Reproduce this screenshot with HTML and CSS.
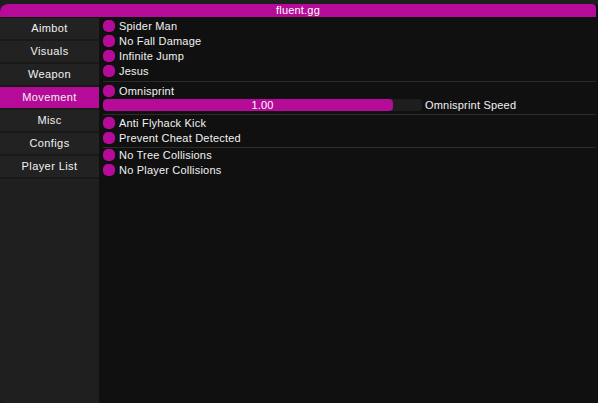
FILE: index.html
```html
<!DOCTYPE html>
<html>
<head>
<meta charset="utf-8">
<link rel="stylesheet" href="styles.css">
</head>
<body>
<div class="window">
  <div class="titlebar">fluent.gg</div>
  <div class="main">
    <nav class="sidebar">
      <div class="tab">Aimbot</div>
      <div class="tab">Visuals</div>
      <div class="tab">Weapon</div>
      <div class="tab active">Movement</div>
      <div class="tab">Misc</div>
      <div class="tab">Configs</div>
      <div class="tab">Player List</div>
    </nav>
    <section class="content">
      <div class="row"><span class="cb"></span><span>Spider Man</span></div>
      <div class="row"><span class="cb"></span><span>No Fall Damage</span></div>
      <div class="row"><span class="cb"></span><span>Infinite Jump</span></div>
      <div class="row"><span class="cb"></span><span>Jesus</span></div>
      <div class="sep s1"></div>
      <div class="row"><span class="cb"></span><span>Omnisprint</span></div>
      <div class="slider-row">
        <div class="slider">
          <div class="fill" style="width: 290px"></div>
          <span class="value">1.00</span>
        </div>
        <span class="slider-label">Omnisprint Speed</span>
      </div>
      <div class="sep s2"></div>
      <div class="row"><span class="cb"></span><span>Anti Flyhack Kick</span></div>
      <div class="row"><span class="cb"></span><span>Prevent Cheat Detected</span></div>
      <div class="sep s3"></div>
      <div class="row"><span class="cb"></span><span>No Tree Collisions</span></div>
      <div class="row"><span class="cb"></span><span>No Player Collisions</span></div>
    </section>
  </div>
</div>
</body>
</html>
```
FILE: styles.css
```css
* { box-sizing: border-box; }
html, body {
  margin: 0;
  padding: 0;
  width: 598px;
  height: 403px;
  overflow: hidden;
  background: #1d1f1f;
  font-family: "Liberation Sans", Arial, sans-serif;
  font-size: 11px;
  color: #f2f2f2;
}
.window {
  margin-top: 4px;
  height: 399px;
  display: flex;
  flex-direction: column;
  background: #0d0d0d;
  border-top-left-radius: 8px;
  border-top-right-radius: 4px;
  border-bottom-left-radius: 4px;
  overflow: hidden;
}
.titlebar {
  height: 13px;
  line-height: 13px;
  background: #b50b98;
  text-align: center;
  color: #ffffff;
  margin-right: 2px;
  border-top-right-radius: 4px;
  flex: none;
  letter-spacing: 0.2px;
}
.main {
  flex: 1;
  display: flex;
  margin-top: 1px;
  min-height: 0;
}
.sidebar {
  width: 99px;
  flex: none;
  background: #1f1f1f;
  display: flex;
  flex-direction: column;
}
.tab {
  height: 23px;
  line-height: 21px;
  text-align: center;
  background: #222222;
  border-bottom: 2px solid #191919;
  letter-spacing: 0.4px;
}
.tab.active {
  background: #b50b98;
}
.content {
  flex: 1;
  background: #101010;
  padding: 1px 2px 0 4px;
  display: flex;
  flex-direction: column;
  letter-spacing: 0.2px;
}
.row {
  height: 15px;
  display: flex;
  align-items: flex-start;
  gap: 4px;
  line-height: 14px;
}
.cb {
  width: 12px;
  height: 12px;
  margin-top: 1px;
  border-radius: 5px;
  background: #b50b98;
  flex: none;
}
.sep {
  height: 1px;
  background: #2c2c2c;
  flex: none;
}
.sep.s1 { margin: 2px 0 2px; }
.sep.s2 { margin: 3px 0 1px; }
.sep.s3 { margin: 1px 0 0; }
.slider-row {
  height: 12px;
  display: flex;
  align-items: center;
  gap: 3px;
}
.slider {
  position: relative;
  width: 319px;
  height: 12px;
  background: #1e1e1e;
  border-radius: 4px;
  overflow: hidden;
}
.fill {
  height: 12px;
  background: #b50b98;
  border-radius: 4px;
}
.value {
  position: absolute;
  left: 0;
  right: 0;
  top: 0;
  text-align: center;
  line-height: 12px;
  color: #ffffff;
}
.slider-label {
  line-height: 12px;
}
```
